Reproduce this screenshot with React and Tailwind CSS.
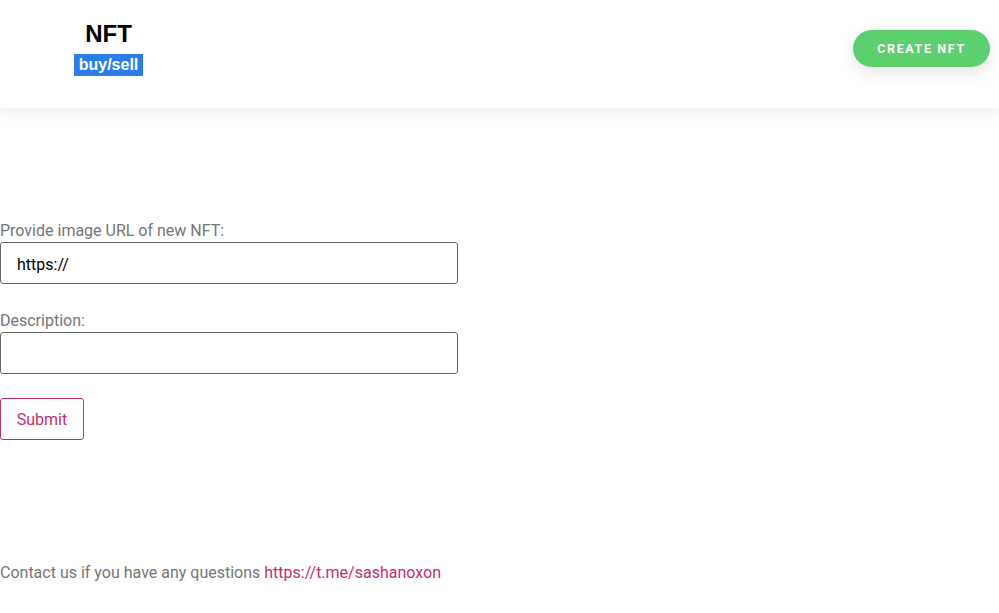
import React from "react";

export default function App() {
  return (
    <div className="min-h-[613px] bg-white font-['Roboto',sans-serif]">
      <header className="h-[108px] flex items-start justify-between shadow-[0_4px_14px_rgba(0,0,0,0.09)] relative">
        <div className="ml-[74px] w-[69px] flex flex-col items-center pt-[20px]">
          <div className="font-['Liberation_Sans',Arial,sans-serif] font-bold text-[24px] leading-[28px] text-black">NFT</div>
          <div className="mt-[6px] bg-[#2b7de9] text-white font-['Liberation_Sans',Arial,sans-serif] font-bold text-[16px] leading-[22px] px-[5px]">buy/sell</div>
        </div>
        <button className="mt-[30px] mr-[9px] h-[37px] w-[137px] pt-[2px] rounded-full bg-[#5ccf6e] text-white text-[12.5px] font-bold tracking-[0.13em] shadow-[0_6px_16px_rgba(0,0,0,0.1)]">
          CREATE NFT
        </button>
      </header>

      <main className="pt-[110px]">
        <form className="flex flex-col" onSubmit={(e) => e.preventDefault()}>
          <label className="pt-[2px] text-[16px] leading-[22px] text-[#757575]">Provide image URL of new NFT:</label>
          <input
            defaultValue="https://"
            className="w-[458px] h-[42px] border border-[#666] rounded-[3px] px-[16px] pt-[2px] text-[16px] text-black outline-none"
          />
          <label className="mt-[24px] pt-[2px] text-[16px] leading-[22px] text-[#757575]">Description:</label>
          <input className="w-[458px] h-[42px] border border-[#666] rounded-[3px] px-[16px] text-[16px] text-black outline-none" />
          <div className="mt-[24px]">
            <button className="h-[42px] w-[84px] border border-[#c0306a] rounded-[3px] pt-[2px] text-[16px] text-[#c0306a]">Submit</button>
          </div>
        </form>
        <p className="mt-[120px] pt-[2px] text-[16px] leading-[22px] text-[#757575]">
          Contact us if you have any questions <a className="text-[#c0306a]" href="#">https://t.me/sashanoxon</a>
        </p>
      </main>
    </div>
  );
}
